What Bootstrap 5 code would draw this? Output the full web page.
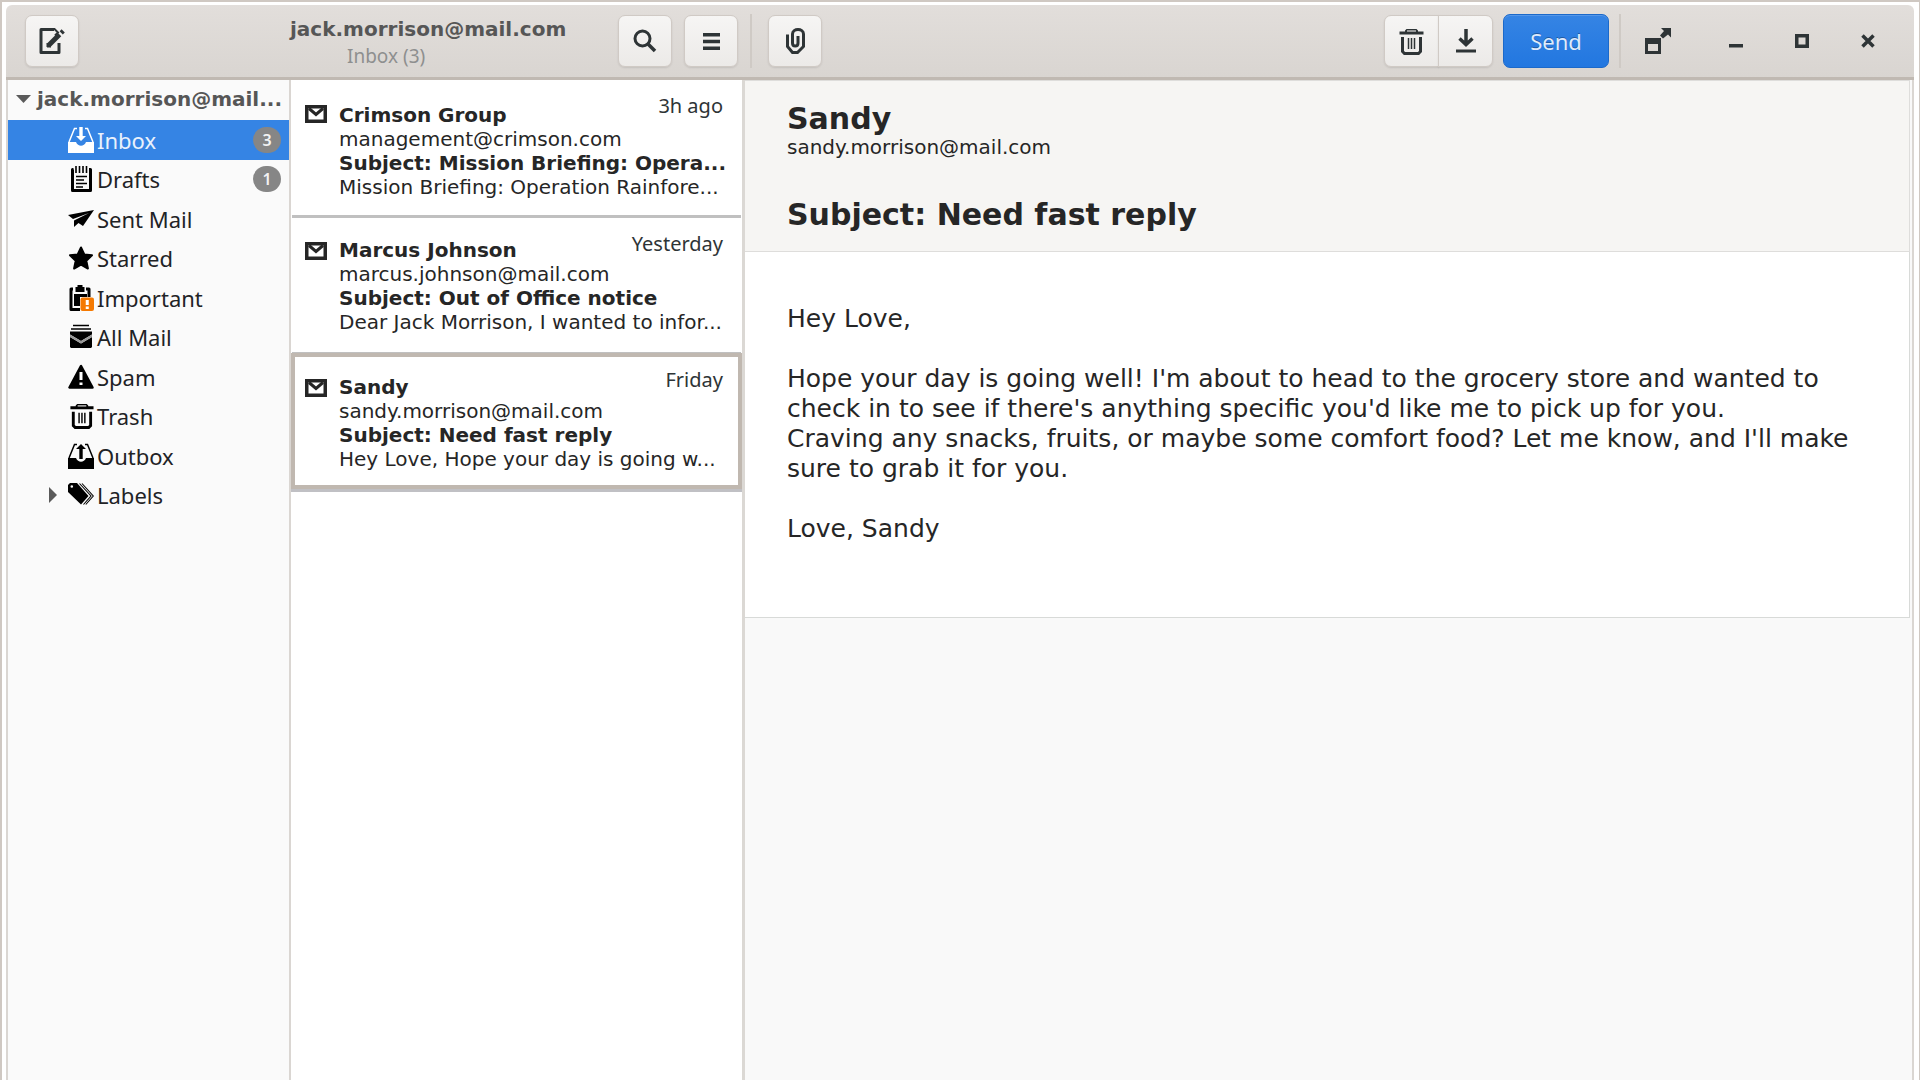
<!DOCTYPE html>
<html lang="en">
<head>
<meta charset="utf-8">
<meta name="viewport" content="width=device-width, initial-scale=1">
<title>Inbox (3) - jack.morrison@mail.com</title>
<link href="https://cdn.jsdelivr.net/npm/bootstrap@5.3.0/dist/css/bootstrap.min.css" rel="stylesheet">
<style>
:root {
  --frame: #cfc8c2;
  --edge: #dad6d2;
  --ink: #262626;
  --icon: #2e3436;
  --ui: "Noto Sans", "Open Sans", sans-serif;
}
body { font-family: "DejaVu Sans", sans-serif; font-size: 20px; line-height: 24px; color: var(--ink); background: #fff; }
a, a:hover { color: inherit; text-decoration: none; }
svg { display: block; flex: none; }

.mail-window { border: solid var(--frame); border-width: 2px 1px 0 2px; padding: 3px 5px 0 4px; }
.titlebar { background: linear-gradient(#e2dedb, #d9d5d1); border-bottom: 3px solid #c0b9b2; border-radius: 6px 6px 0 0; color: var(--icon); }
.bar-side { width: 284px; padding: 10px 0 10px 19px; }
.bar-list { width: 454px; padding-right: 6px; }
.bar-reader { padding: 0 19px 0 6px; min-width: 0; }
.acct-heading { padding-top: 6px; }
.acct-title { font-weight: 700; color: #565656; }
.acct-sub { font-family: var(--ui); font-size: 19px; color: #8e8f8f; padding-left: 57px; line-height: 30px; }
.tool { --bs-btn-padding-x: 0; --bs-btn-padding-y: 0; width: 54px; height: 52px; display: flex; align-items: center; justify-content: center; color: var(--icon); border-radius: 7px; }
.btn-group .tool { width: 55px; }
.tool-raised { background: linear-gradient(#f6f5f4, #eceae8); border: 1px solid #d0cac5; box-shadow: 0 1px 2px rgba(0,0,0,.1); }
.btn.tool:hover { color: var(--icon); }
.send-btn { width: 106px; height: 54px; margin: 0 10px; background: linear-gradient(#3584e4, #2277e0); border: 1px solid #1b69ca; color: #dfebfb; font-family: var(--ui); font-size: 22px; border-radius: 7px; padding: 0; box-shadow: inset 0 1px #5597e8; text-shadow: 0 -1px rgba(0,0,0,.3); }
.bar-rule { width: 2px; height: 54px; background: #cfcac5; }
.tool-row { gap: 12px; }
.window-tools { padding-left: 10px; }
.detach-btn { margin-right: 12px; }

.panes { border: solid var(--edge); border-width: 0 2px; }
.folders { width: 283px; background: #fafafa; border-right: 2px solid var(--edge); }
.acct-row { height: 40px; padding: 0 8px 2px; gap: 6px; color: #565656; font-weight: 700; white-space: nowrap; }
.folder-grid { display: grid; grid-template-rows: repeat(10, 1fr); height: 395px; }
.folder { font-family: var(--ui); font-size: 22px; color: #1f2326; padding: 0 8px 0 60px; gap: 3px; }
.folder svg { color: #000; }
.folder.chosen, .folder.chosen:hover, .folder.chosen svg { background: #3584e4; color: #e9f1fc; }
.folder.chosen svg { color: #fff; }
.folder.has-children { padding-left: 41px; }
.count-pill { width: 28px; height: 26px; border-radius: 13px; background: #868686; color: #f2f2f2; font-size: 16px; font-weight: 600; line-height: 26px; text-align: center; }

.messages { width: 454px; background: #fff; border-right: 3px solid #dbd8d4; }
.msg { margin: 0 1px; padding: 20px 14px 18px 13px; border-bottom: 3px solid #c0c0c0; gap: 12px; position: relative; white-space: nowrap; }
.msg-first { padding-top: 23px; padding-bottom: 16px; }
.msg-second { border-bottom-width: 1px; }
.msg-open { margin: 0; padding: 18px 10px 14px 10px; border: 4px solid #c0b8b0; box-shadow: 0 3px #c0c0c4; }
.msg-icon { margin-top: 4px; }
.msg-first .msg-icon { margin-top: 2px; }
.msg-when { font-family: var(--ui); color: #2e3436; position: absolute; top: 14px; right: 18px; }
.msg-open .msg-when { top: 11px; right: 15px; }

.reader { background: #f9f9f9; min-width: 0; padding-right: 2px; }
.letter-head { background: #f6f5f3; padding: 22px 40px 20px 42px; border: solid #dedddb; border-width: 1px 1px 1px 0; }
.big-line { font-size: 30px; font-weight: 700; line-height: 32px; margin: 0; }
.letter-subject { margin-top: 40px; }
.letter-body { background: #fff; font-size: 25px; line-height: 30px; padding: 52px 40px 73px 42px; border: solid #d8dad8; border-width: 0 1px 1px 0; }
.letter-body p { margin: 0 0 30px; }
.letter-body p:last-child { margin: 0; }
</style>
</head>
<body>
<svg width="0" height="0" class="position-absolute" aria-hidden="true">
  <defs>
    <symbol id="i-mail" viewBox="0 0 22 18"><rect x="1.750" y="1.750" width="18.500" height="14.500" fill="none" stroke="currentColor" stroke-width="3.500"/><path d="M4 3.500l7 6 7-6" fill="none" stroke="currentColor" stroke-width="3"/></symbol>
    <symbol id="i-trash" viewBox="0 0 25 27"><path d="M6 3.5V2.5L7.500 1h10L19 2.500v1h5.500v3H.5v-3z" fill="currentColor"/><path d="M8 3h9" stroke="#bbb" stroke-width="1.500"/><path d="M3.500 9v14.500l2 2h14l2-2V9" fill="none" stroke="currentColor" stroke-width="3"/><path d="M9.500 10v11M12.500 10v11M15.500 10v11" stroke="currentColor" stroke-width="1.500"/></symbol>
  </defs>
</svg>

<div class="mail-window d-flex flex-column min-vh-100">
  <header class="titlebar d-flex align-items-center">
    <div class="bar-side">
      <button type="button" class="btn tool tool-raised" aria-label="Compose">
        <svg width="26" height="26" viewBox="0 0 26 26" fill="none" stroke="currentColor"><path d="M15 1.500H2v23h18V15" stroke-width="3" stroke-linejoin="round"/><path d="M14.500 0l4.500 4.500-3 3" stroke-width="2"/><path d="M9.500 17.500L20.500 6.500" stroke-width="5"/><path d="M8 15v4h4" fill="currentColor" stroke-width="1"/><path d="M22.200 4.800l2-2" stroke-width="4.500"/></svg>
      </button>
    </div>
    <div class="bar-list d-flex align-items-center">
      <div class="acct-heading">
        <div class="acct-title">jack.morrison@mail.com</div>
        <div class="acct-sub">Inbox (3)</div>
      </div>
      <div class="tool-row d-flex ms-auto">
        <button type="button" class="btn tool tool-raised" aria-label="Search">
          <svg width="24" height="24" viewBox="0 0 24 24" fill="none" stroke="currentColor" stroke-width="3"><circle cx="9.500" cy="9.500" r="7.500"/><path d="M15 15l7 7" stroke-width="3.500"/></svg>
        </button>
        <button type="button" class="btn tool tool-raised" aria-label="Menu">
          <svg width="17" height="17" viewBox="0 0 17 17" fill="currentColor"><path d="M0 0h17v3.500H0zM0 6.750h17v3.500H0zM0 13.500h17V17H0z"/></svg>
        </button>
      </div>
    </div>
    <div class="bar-reader d-flex align-items-center flex-grow-1">
      <div class="bar-rule"></div>
      <button type="button" class="btn tool tool-raised ms-3" aria-label="Attach">
        <svg width="19" height="26" viewBox="0 0 19 26" fill="none" stroke="currentColor" stroke-width="3"><path d="M1.500 6.500v12l5 6h5l6-6V6c0-6-11-6-11 0v9c0 4 5.500 4 5.500 0V8"/></svg>
      </button>
      <div class="btn-group ms-auto">
        <button type="button" class="btn tool tool-raised" aria-label="Trash"><svg width="25" height="27"><use href="#i-trash"/></svg></button>
        <button type="button" class="btn tool tool-raised" aria-label="Archive">
          <svg width="20" height="24" viewBox="0 0 20 24" fill="none" stroke="currentColor" stroke-width="3.500"><path d="M10 0v16M3.500 9.500l6.500 6 6.500-6"/><path d="M0 22h20" stroke-width="3"/></svg>
        </button>
      </div>
      <button type="button" class="btn send-btn">Send</button>
      <div class="bar-rule"></div>
      <div class="tool-row window-tools d-flex">
        <button type="button" class="btn tool detach-btn" aria-label="Detach">
          <svg width="26" height="26" viewBox="0 0 26 26"><path fill="currentColor" fill-rule="evenodd" d="M0 10h16v16H0zM3 16v7h10v-7zM16 0h10v9.500l-3-3-5 4-3-3 4-4.500z"/></svg>
        </button>
        <button type="button" class="btn tool" aria-label="Minimise"><svg width="14" height="14" viewBox="0 0 14 14"><path d="M0 10h14v3.500H0z" fill="currentColor"/></svg></button>
        <button type="button" class="btn tool" aria-label="Maximise"><svg width="14" height="14" viewBox="0 0 14 14"><path d="M1.750 1.750h10.500v10.500H1.750z" fill="none" stroke="currentColor" stroke-width="3.500"/></svg></button>
        <button type="button" class="btn tool" aria-label="Close"><svg width="14" height="14" viewBox="0 0 14 14"><path d="M1.500 1.500l11 11M12.500 1.500l-11 11" stroke="currentColor" stroke-width="3.500"/></svg></button>
      </div>
    </div>
  </header>

  <main class="panes d-flex flex-grow-1">
    <nav class="folders flex-shrink-0" aria-label="Folders">
      <div class="acct-row d-flex align-items-center">
        <svg width="15" height="8" viewBox="0 0 15 8"><path d="M0 0h15L7.500 8z" fill="#5a5a5a"/></svg>
        <span>jack.morrison@mail...</span>
      </div>
      <div class="folder-grid">
        <a href="#" class="folder chosen d-flex align-items-center">
          <svg width="26" height="26" viewBox="0 0 26 26"><path d="M0 15h8c2 5 8 5 10 0h8v11H0z" fill="currentColor"/><path d="M9 1.500H6.500L1 15M17 1.500h2.500L25 15" fill="none" stroke="currentColor" stroke-width="1.500"/><path d="M11.300 0h3.400v9H18l-5 5-5-5h3.300z" fill="currentColor"/></svg>
          <span>Inbox</span><span class="count-pill ms-auto">3</span></a>
        <a href="#" class="folder d-flex align-items-center">
          <svg width="26" height="26" viewBox="0 0 26 26" fill="none" stroke="currentColor"><path d="M5.500 3.500H4.500v21h18v-21H21" stroke-width="3" stroke-linejoin="round"/><path d="M8 0v7M11.500 0v7M15 0v7M18.500 0v7" stroke-width="1.600"/><path d="M8 10.500h11M8 14h8M8 17.500h11M8 21h7" stroke-width="1.500"/></svg>
          <span>Drafts</span><span class="count-pill ms-auto">1</span></a>
        <a href="#" class="folder d-flex align-items-center">
          <svg width="26" height="26" viewBox="0 0 26 26"><path d="M26 4L0 9l5 4L21 7 6 14.500V21l4.500-4 4.500 3z" fill="currentColor"/></svg>
          <span>Sent Mail</span></a>
        <a href="#" class="folder d-flex align-items-center">
          <svg width="26" height="26" viewBox="0 0 26 26"><path d="M13 2.500l3.300 7 7.700.8-5.700 5.400 1.600 7.800L13 19.700l-6.900 3.800 1.600-7.800L2 10.300l7.700-.8z" fill="currentColor" stroke="currentColor" stroke-width="2" stroke-linejoin="round"/></svg>
          <span>Starred</span></a>
        <a href="#" class="folder d-flex align-items-center">
          <svg width="26" height="26" viewBox="0 0 26 26"><path d="M5 4H3v20.500h9M18 4h3v8" fill="none" stroke="currentColor" stroke-width="3" stroke-linejoin="round"/><path d="M7.500 2h2V0h5v2h2v5h-9zM6 9h13v3h-7v9H6z" fill="currentColor"/><rect x="12.500" y="12.500" width="13.500" height="13.500" rx="2" fill="#f57900"/><path d="M19.250 15v5M19.250 21.500V24" stroke="#fff" stroke-width="3"/></svg>
          <span>Important</span></a>
        <a href="#" class="folder d-flex align-items-center">
          <svg width="26" height="26" viewBox="0 0 26 26"><path d="M5 1.500h16M3 5h20" stroke="currentColor" stroke-width="1.700"/><path d="M2 7.500h22v3L13 17 2 10.500zM2 13l11 6.500L24 13v10l-1 1H3l-1-1z" fill="currentColor"/><path d="M2 10.500L13 17l11-6.500V13l-11 6.500L2 13z" fill="#999"/></svg>
          <span>All Mail</span></a>
        <a href="#" class="folder d-flex align-items-center">
          <svg width="26" height="26" viewBox="0 0 26 26"><path d="M13 2L1.500 23.500h23z" fill="currentColor" stroke="currentColor" stroke-width="2.500" stroke-linejoin="round"/><path d="M13 8v8M13 18.500V21" stroke="#fff" stroke-width="3"/></svg>
          <span>Spam</span></a>
        <a href="#" class="folder d-flex align-items-center">
          <svg width="26" height="26" viewBox="-1 0 25 27"><use href="#i-trash" width="25" height="27"/></svg>
          <span>Trash</span></a>
        <a href="#" class="folder d-flex align-items-center">
          <svg width="26" height="26" viewBox="0 0 26 26"><path d="M0 15h8c2 5 8 5 10 0h8v11H0z" fill="currentColor"/><path d="M9 1.500H6.500L1 15M17 1.500h2.500L25 15" fill="none" stroke="currentColor" stroke-width="1.500"/><path d="M13 1l5 5h-3.300v10h-3.400V6H8z" fill="currentColor"/></svg>
          <span>Outbox</span></a>
        <a href="#" class="folder has-children d-flex align-items-center">
          <svg width="8" height="16" viewBox="0 0 8 16" class="me-2"><path d="M0 0l8 8-8 8z" fill="#5a5a5a"/></svg>
          <svg width="26" height="26" viewBox="0 0 26 26"><path fill="currentColor" fill-rule="evenodd" d="M0 3l2-2h7l11.500 13-7.500 8.500L0 10zM2.500 4.500a1.300 1.300 0 1 0 2.600 0 1.300 1.300 0 1 0-2.600 0"/><path d="M11.500 1.500l11.500 12.500-7.500 8.500M14 1.500L25.300 14l-7.500 8.500" fill="none" stroke="currentColor" stroke-width="1.100"/></svg>
          <span>Labels</span></a>
      </div>
    </nav>

    <section class="messages flex-shrink-0" aria-label="Messages">
      <a href="#" class="msg msg-first d-flex align-items-start">
        <svg class="msg-icon" width="22" height="18"><use href="#i-mail"/></svg>
        <div>
          <div class="fw-bold">Crimson Group</div>
          <div>management@crimson.com</div>
          <div class="fw-bold">Subject: Mission Briefing: Opera...</div>
          <div>Mission Briefing: Operation Rainfore...</div>
        </div>
        <span class="msg-when">3h ago</span>
      </a>
      <a href="#" class="msg msg-second d-flex align-items-start">
        <svg class="msg-icon" width="22" height="18"><use href="#i-mail"/></svg>
        <div>
          <div class="fw-bold">Marcus Johnson</div>
          <div>marcus.johnson@mail.com</div>
          <div class="fw-bold">Subject: Out of Office notice</div>
          <div>Dear Jack Morrison, I wanted to infor...</div>
        </div>
        <span class="msg-when">Yesterday</span>
      </a>
      <a href="#" class="msg msg-open d-flex align-items-start">
        <svg class="msg-icon" width="22" height="18"><use href="#i-mail"/></svg>
        <div>
          <div class="fw-bold">Sandy</div>
          <div>sandy.morrison@mail.com</div>
          <div class="fw-bold">Subject: Need fast reply</div>
          <div>Hey Love, Hope your day is going w...</div>
        </div>
        <span class="msg-when">Friday</span>
      </a>
    </section>

    <article class="reader flex-grow-1">
      <div class="letter-head">
        <h1 class="big-line">Sandy</h1>
        <div>sandy.morrison@mail.com</div>
        <h2 class="big-line letter-subject">Subject: Need fast reply</h2>
      </div>
      <div class="letter-body">
        <p>Hey Love,</p>
        <p>Hope your day is going well! I'm about to head to the grocery store and wanted to check in to see if there's anything specific you'd like me to pick up for you.<br>Craving any snacks, fruits, or maybe some comfort food? Let me know, and I'll make sure to grab it for you.</p>
        <p>Love, Sandy</p>
      </div>
    </article>
  </main>
</div>
<script src="https://cdn.jsdelivr.net/npm/bootstrap@5.3.0/dist/js/bootstrap.bundle.min.js"></script>
</body>
</html>
